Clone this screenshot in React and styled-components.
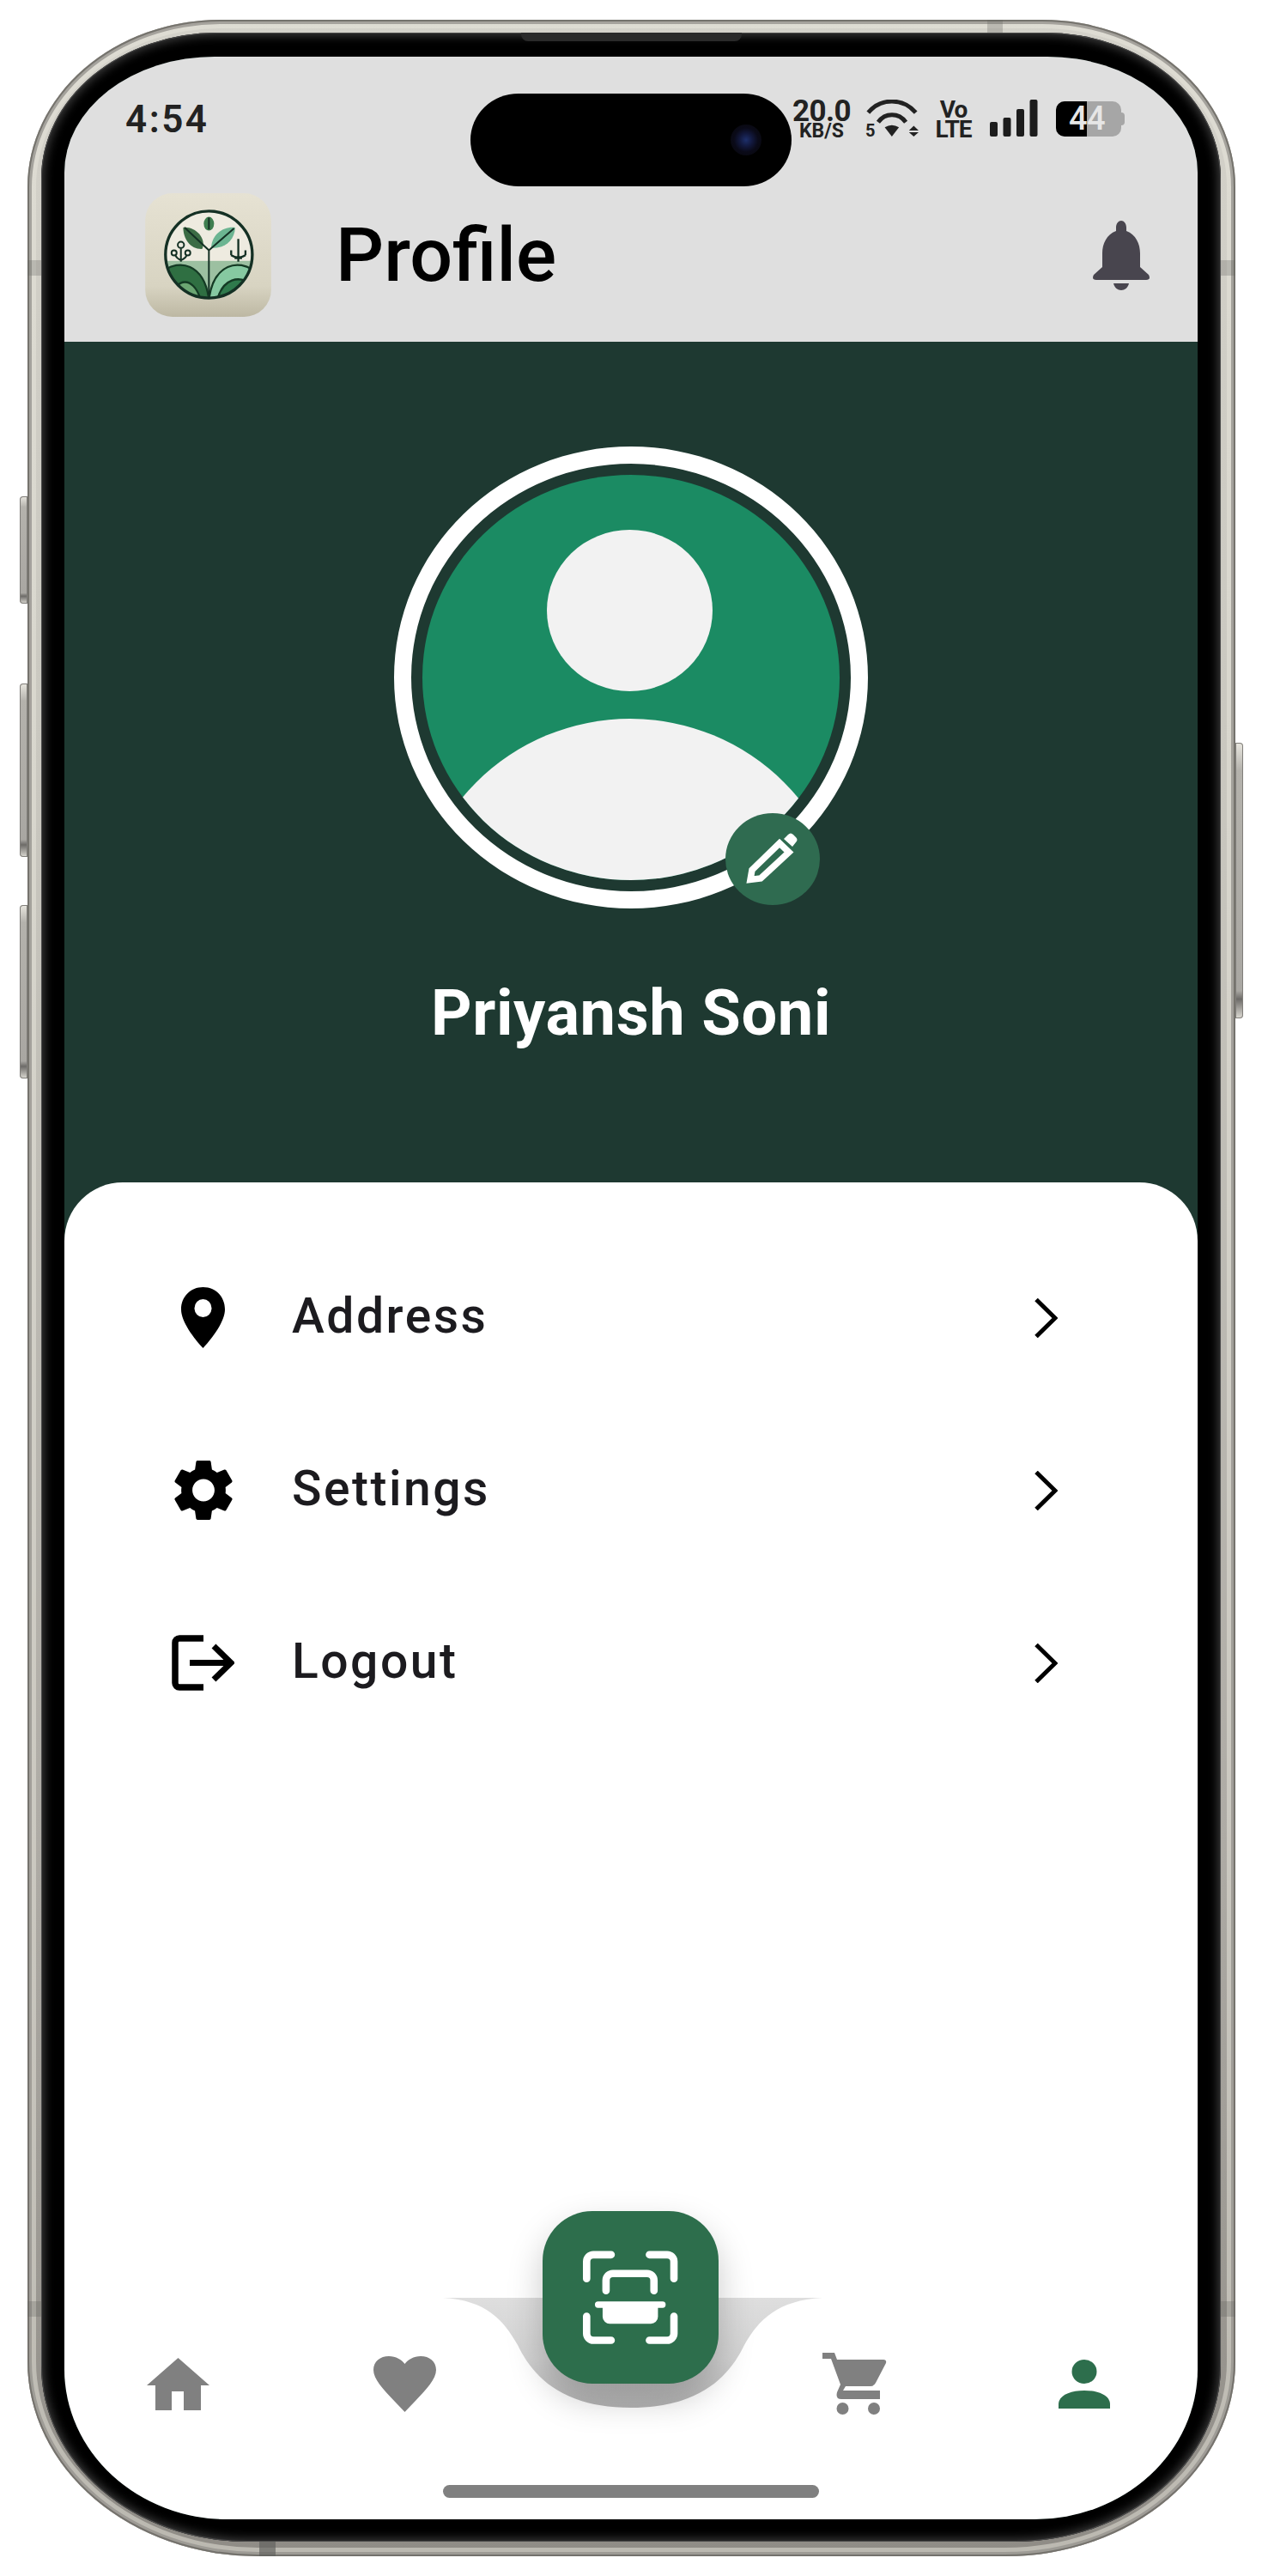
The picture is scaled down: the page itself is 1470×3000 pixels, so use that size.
import React from "react";
import styled, { createGlobalStyle } from "styled-components";

const Global = createGlobalStyle`
  html, body { margin: 0; padding: 0; background: #fff; }
  * { box-sizing: border-box; }
  body { font-family: "Roboto", "Liberation Sans", sans-serif; }
`;

const Page = styled.div`
  width: 1470px;
  height: 3000px;
  padding: 23px 0 0 32px;
  background: #fff;
`;

const Metal = styled.div`
  position: relative;
  width: 1407px;
  height: 2954px;
  padding: 15px 17px 17px 16px;
  border-radius: 225px 225px 268px 268px / 195px 195px 227px 227px;
  background: linear-gradient(180deg, #d4d2ca 0%, #c9c7bf 30%, #aeaba5 72%, #8f8c86 100%);
  box-shadow: inset 0 0 0 2px rgba(112, 110, 104, 0.9), inset 0 0 0 5px rgba(150, 148, 142, 0.8), inset 0 0 0 10px rgba(232, 230, 220, 0.5);
`;

const Band = styled.div`
  position: absolute;
  left: ${(p) => p.$x}px;
  top: ${(p) => p.$y}px;
  width: ${(p) => p.$w}px;
  height: ${(p) => p.$h}px;
  background: rgba(96, 96, 92, ${(p) => p.$o || 0.28});
`;

const SideButton = styled.div`
  position: absolute;
  top: ${(p) => p.$y}px;
  height: ${(p) => p.$h}px;
  width: 9px;
  ${(p) => (p.$right ? "left: 1407px; border-radius: 0 4px 4px 0;" : "left: -9px; border-radius: 4px 0 0 4px;")}
  background: linear-gradient(180deg, #e8e6df 0%, #b4b2ac 10%, #a9a7a2 90%, #6d6b68 93%, #dedcd5 100%);
  box-shadow: inset 0 0 0 1px #807e7a;
`;

const Bezel = styled.div`
  position: relative;
  width: 1374px;
  height: 2922px;
  padding: 28px 27px 26px 27px;
  background: #000;
  border-radius: 205px 205px 240px 240px / 170px 170px 205px 205px;
  box-shadow: inset 0 0 0 1px #4a4a4a, inset 0 0 12px 3px rgba(74, 74, 74, 0.85);
`;

const Speaker = styled.div`
  position: absolute;
  left: 559px;
  top: 0;
  width: 257px;
  height: 10px;
  background: #2a2a2a;
  border-radius: 0 0 8px 8px;
`;

const Screen = styled.div`
  position: relative;
  width: 1320px;
  height: 2868px;
  display: flex;
  flex-direction: column;
  overflow: hidden;
  background: #1e3931;
  border-radius: 175px 175px 190px 190px / 135px 135px 175px 175px;
`;

const Island = styled.div`
  position: absolute;
  left: 473px;
  top: 43px;
  width: 374px;
  height: 108px;
  background: #000;
  border-radius: 56px / 54px;
  z-index: 3;
`;

const Lens = styled.div`
  position: absolute;
  left: 303px;
  top: 36px;
  width: 36px;
  height: 36px;
  border-radius: 50%;
  background: radial-gradient(circle, #1d2f6a 0%, #12183c 30%, #0a0a18 55%, #070709 100%);
`;

const Header = styled.header`
  height: 332px;
  flex: none;
  background: #dfdfdf;
  display: flex;
  flex-direction: column;
`;

const StatusBar = styled.div`
  height: 159px;
  padding: 50px 85px 0 71px;
  display: flex;
  justify-content: space-between;
  align-items: flex-start;
`;

const Time = styled.span`
  font-size: 44px;
  line-height: 46px;
  font-weight: 600;
  letter-spacing: 2.5px;
  color: #222;
`;

const StatusGroup = styled.div`
  display: flex;
  align-items: flex-start;
`;

const Speed = styled.div`
  width: 72px;
  margin-left: -2px;
  display: flex;
  flex-direction: column;
  align-items: center;
  color: #222;
  font-weight: 700;
  margin-right: 15px;
`;

const SpeedValue = styled.span`
  font-size: 35px;
  line-height: 27px;
  letter-spacing: -0.6px;
`;

const SpeedUnit = styled.span`
  font-size: 23px;
  line-height: 20px;
`;

const WifiBox = styled.div`
  position: relative;
  width: 63px;
  height: 44px;
  display: flex;
`;

const WifiBand = styled.span`
  position: absolute;
  left: 0;
  bottom: 0;
  font-size: 20px;
  line-height: 16px;
  font-weight: 700;
  color: #222;
`;

const Volte = styled.div`
  width: 39px;
  margin: 0 23px 0 20px;
  display: flex;
  flex-direction: column;
  align-items: center;
  color: #222;
  font-weight: 700;
`;

const VolteLine = styled.span`
  font-size: 28px;
  line-height: 23px;
  letter-spacing: -1px;
  white-space: nowrap;
`;

const Battery = styled.div`
  position: relative;
  width: 76px;
  height: 41px;
  margin: 2px 4px 0 21px;
  border-radius: 10px;
  background: #a6a6a6;
  overflow: visible;
`;

const BatteryFill = styled.div`
  position: absolute;
  inset: 0 40px 0 0;
  background: #000;
  border-radius: 10px 0 0 10px;
`;

const BatteryNub = styled.div`
  position: absolute;
  right: -4px;
  top: 13px;
  width: 4px;
  height: 15px;
  background: #a6a6a6;
  border-radius: 0 4px 4px 0;
`;

const BatteryText = styled.span`
  position: absolute;
  left: 15px;
  top: 0;
  font-size: 38px;
  line-height: 41px;
  font-weight: 500;
  letter-spacing: -0.5px;
  color: #e6e6e6;
`;

const AppBar = styled.div`
  flex: 1;
  padding: 0 55px 29px 94px;
  display: flex;
  align-items: center;
`;

const Title = styled.h1`
  flex: 1;
  margin: 0 0 0 75px;
  font-size: 88px;
  line-height: 100px;
  font-weight: 500;
  color: #000;
`;

const Hero = styled.section`
  height: 979px;
  flex: none;
  padding-top: 122px;
  display: flex;
  flex-direction: column;
  align-items: center;
`;

const Avatar = styled.div`
  position: relative;
  width: 552px;
  height: 538px;
  padding: 13px;
  border: 20px solid #fff;
  border-radius: 50%;
  flex: none;
`;

const Disc = styled.div`
  position: relative;
  width: 100%;
  height: 100%;
  border-radius: 50%;
  overflow: hidden;
  background: #1b8b63;
`;

const Head = styled.div`
  position: absolute;
  left: 145px;
  top: 64px;
  width: 193px;
  height: 188px;
  border-radius: 50%;
  background: #f2f2f2;
`;

const Shoulders = styled.div`
  position: absolute;
  left: -12px;
  top: 284px;
  width: 508px;
  height: 508px;
  border-radius: 50%;
  background: #f2f2f2;
`;

const EditBadge = styled.div`
  position: absolute;
  left: 366px;
  top: 407px;
  width: 110px;
  height: 107px;
  border-radius: 50%;
  background: #2f6b50;
`;

const Name = styled.div`
  margin-top: 82px;
  font-size: 74px;
  line-height: 80px;
  font-weight: 700;
  letter-spacing: 0.6px;
  color: #fff;
`;

const Sheet = styled.section`
  flex: 1;
  display: flex;
  flex-direction: column;
  background: #fff;
  border-radius: 68px 68px 0 0;
`;

const Menu = styled.div`
  flex: 1;
  padding-top: 57px;
  display: flex;
  flex-direction: column;
`;

const Row = styled.div`
  height: 201px;
  padding: 0 163px 0 125px;
  display: flex;
  align-items: center;
`;

const RowIcon = styled.div`
  width: 73px;
  display: flex;
  justify-content: center;
  align-items: center;
  color: #000;
`;

const RowLabel = styled.span`
  flex: 1;
  margin: 0 0 3px 67px;
  font-size: 57px;
  line-height: 70px;
  font-weight: 500;
  letter-spacing: 2.5px;
  color: #1c1b1f;
`;

const Nav = styled.nav`
  position: relative;
  height: 258px;
  flex: none;
  display: flex;
  flex-direction: column;
  align-items: center;
`;

const NavNotch = styled.svg`
  position: absolute;
  left: 441px;
  top: 0;
`;

const Fab = styled.div`
  position: absolute;
  left: 557px;
  top: -101px;
  width: 205px;
  height: 201px;
  border-radius: 58px;
  background: #2d6e4c;
  box-shadow: 0 18px 40px rgba(0, 0, 0, 0.22);
  display: flex;
  align-items: center;
  justify-content: center;
`;

const NavRow = styled.div`
  width: 100%;
  height: 218px;
  padding-top: 64px;
  display: grid;
  grid-template-columns: repeat(5, 1fr);
`;

const NavItem = styled.div`
  height: 72px;
  display: flex;
  justify-content: center;
  align-items: center;
  color: ${(p) => (p.$active ? "#2d6e4c" : "#808080")};
`;

const HomeIndicator = styled.div`
  width: 438px;
  height: 15px;
  border-radius: 8px;
  background: #808080;
`;

const Logo = () => (
  <svg width="147" height="144" viewBox="57 45 441 433">
    <defs>
      <linearGradient id="lg" x1="0" y1="0" x2="0" y2="1">
        <stop offset="0" stopColor="#e6e2d3" />
        <stop offset="0.75" stopColor="#d8d4c2" />
        <stop offset="1" stopColor="#bdb8a3" />
      </linearGradient>
      <clipPath id="lc">
        <circle cx="280" cy="260" r="150" />
      </clipPath>
    </defs>
    <rect x="57" y="45" width="441" height="433" rx="95" fill="url(#lg)" />
    <circle cx="280" cy="260" r="152" fill="#eeebe0" />
    <g clipPath="url(#lc)">
      <rect x="120" y="282" width="320" height="140" fill="#9cc0a1" />
      <path d="M120 318 C175 275 262 290 280 415 H120 Z" fill="#2f6f42" stroke="#143a24" strokeWidth="7" />
      <path d="M440 318 C385 275 298 290 280 415 H440 Z" fill="#86c9a1" stroke="#143a24" strokeWidth="7" />
      <path d="M150 410 C165 340 225 335 250 415 Z" fill="#6ba572" stroke="#143a24" strokeWidth="7" />
      <path d="M310 415 C330 345 385 330 430 365 V415 Z" fill="#2f7a4c" stroke="#143a24" strokeWidth="7" />
    </g>
    <circle cx="280" cy="260" r="152" fill="none" stroke="#143024" strokeWidth="10" />
    <path d="M190 165 C230 160 272 200 257 240 C215 242 190 205 190 165 Z" fill="#3c6c45" />
    <path d="M372 165 C330 160 290 190 288 236 C335 240 370 210 372 165 Z" fill="#6cb592" />
    <ellipse cx="280" cy="152" rx="18" ry="24" fill="#3f7f50" />
    <path d="M280 400 V245 L195 165 M280 245 L368 168 M280 130 V172" fill="none" stroke="#143024" strokeWidth="6" />
    <path d="M182 285 V238 M182 280 C170 275 165 268 162 262 M182 280 C195 275 200 268 202 262" fill="none" stroke="#143024" strokeWidth="6" />
    <circle cx="182" cy="226" r="11" fill="none" stroke="#143024" strokeWidth="6" />
    <circle cx="158" cy="254" r="9" fill="none" stroke="#143024" strokeWidth="6" />
    <circle cx="206" cy="254" r="9" fill="none" stroke="#143024" strokeWidth="6" />
    <path d="M383 205 V285 M358 262 Q383 278 408 262 M358 245 V262 M408 245 V262 M370 272 H396" fill="none" stroke="#143024" strokeWidth="7" />
  </svg>
);

const Bell = () => (
  <svg width="68" height="81" viewBox="0 0 66 81" fill="#48454e">
    <path d="M33 0 C36 0 39 3 39 8 V12 C50 16 55 27 55 38 V54 L65 63 Q68 69 62 69 H4 Q-2 69 1 63 L11 54 V38 C11 27 16 16 27 12 V8 C27 3 30 0 33 0 Z" />
    <path d="M24 73 H42 C41 78 37 81 33 81 C29 81 25 78 24 73 Z" />
  </svg>
);

const Wifi = () => (
  <WifiBox>
    <svg width="63" height="44" viewBox="325 85 190 132">
      <path d="M335 130 C380 78 456 78 502 130" fill="none" stroke="#222" strokeWidth="15" />
      <path d="M370 164 C395 130 442 130 467 164" fill="none" stroke="#222" strokeWidth="15" />
      <path d="M393 182 Q418 166 443 182 L418 214 Z" fill="#222" />
      <path d="M478 193 L495 177 L512 193 Z M478 199 H512 L495 214 Z" fill="#222" />
    </svg>
    <WifiBand>5</WifiBand>
  </WifiBox>
);

const Signal = () => (
  <svg width="56" height="43" viewBox="0 0 56 43" fill="#1c1c1c">
    <rect x="0" y="26" width="9" height="17" rx="2" />
    <rect x="15.5" y="21" width="9" height="22" rx="2" />
    <rect x="31" y="11" width="9" height="32" rx="2" />
    <rect x="46.5" y="0" width="9" height="43" rx="2" />
  </svg>
);

const Pencil = () => (
  <svg width="110" height="107" viewBox="0 0 110 107">
    <path d="M29 77.5 L31 66 L63 35 L74 45.5 L41 76 Z" fill="none" stroke="#fff" strokeWidth="7.5" strokeLinejoin="miter" />
    <path d="M68 30 L73 25 Q76 22 79 25 L82 28 Q85 31 82 34 L78 39 Z" fill="#fff" />
  </svg>
);

const Pin = () => (
  <svg width="51" height="71" viewBox="0 0 51 71">
    <path
      fillRule="evenodd"
      fill="#000"
      d="M25.5 0 C11 0 0 11 0 26 C0 40 15 60 25.5 71 C36 60 51 40 51 26 C51 11 40 0 25.5 0 Z M25.5 14 a10 10.5 0 1 1 0 21 a10 10.5 0 1 1 0 -21 Z"
    />
  </svg>
);

const Gear = () => (
  <svg width="70" height="69" viewBox="2.6 2.4 18.8 19.2" fill="#000">
    <path d="M19.14,12.94c0.04-0.3,0.06-0.61,0.06-0.94c0-0.32-0.02-0.64-0.07-0.94l2.03-1.58c0.18-0.14,0.23-0.41,0.12-0.61 l-1.92-3.32c-0.12-0.22-0.37-0.29-0.59-0.22l-2.39,0.96c-0.5-0.38-1.03-0.7-1.62-0.94L14.4,2.81c-0.04-0.24-0.24-0.41-0.48-0.41 h-3.84c-0.24,0-0.43,0.17-0.47,0.41L9.25,5.35C8.66,5.59,8.12,5.92,7.63,6.29L5.24,5.33c-0.22-0.08-0.47,0-0.59,0.22L2.74,8.87 C2.62,9.08,2.66,9.34,2.86,9.48l2.03,1.58C4.84,11.36,4.8,11.69,4.8,12s0.02,0.64,0.07,0.94l-2.03,1.58 c-0.18,0.14-0.23,0.41-0.12,0.61l1.92,3.32c0.12,0.22,0.37,0.29,0.59,0.22l2.39-0.96c0.5,0.38,1.03,0.7,1.62,0.94l0.36,2.54 c0.05,0.24,0.24,0.41,0.48,0.41h3.84c0.24,0,0.44-0.17,0.47-0.41l0.36-2.54c0.59-0.24,1.13-0.56,1.62-0.94l2.39,0.96 c0.22,0.08,0.47,0,0.59-0.22l1.92-3.32c0.12-0.22,0.07-0.47-0.12-0.61L19.14,12.94z M12,15.6c-1.98,0-3.6-1.62-3.6-3.6 s1.62-3.6,3.6-3.6s3.6,1.62,3.6,3.6S13.98,15.6,12,15.6z" />
  </svg>
);

const LogoutIcon = () => (
  <svg width="73" height="65" viewBox="0 0 73 65" fill="none" stroke="#000" strokeWidth="7.5">
    <path d="M37 4 H9 a5 5 0 0 0 -5 5 V56 a5 5 0 0 0 5 5 H37" />
    <path d="M21 32.5 H68 M49 13 L69 32.5 L49 52" strokeWidth="7" />
  </svg>
);

const Chevron = () => (
  <svg width="28" height="46" viewBox="0 0 28 46" fill="none" stroke="#000" strokeWidth="5">
    <path d="M3 1.5 L25 23 L3 44.5" />
  </svg>
);

const Home = () => (
  <svg width="73" height="61" viewBox="0 0 73 61" fill="currentColor">
    <path d="M36.5 0 L73 32 H63 V61 H43 V39 H29 V61 H10 V32 H0 Z" />
  </svg>
);

const Heart = () => (
  <svg width="73" height="65" viewBox="0 0 73 65" fill="currentColor">
    <path d="M36.5 65 C20 47 0 30 0 16 C0 6 8 0 18 0 C26 0 33 4 36.5 9 C40 4 47 0 55 0 C65 0 73 6 73 16 C73 30 53 47 36.5 65 Z" />
  </svg>
);

const Cart = () => (
  <svg width="82" height="72" viewBox="0 0 82 72" fill="currentColor">
    <path d="M0 0 H14 L17 8 H71 Q75 8 74 12 L62 35 Q60 39 56 39 H27 L24 44 H67 V54 H22 Q15 54 17 46 L21 37 L10 7 H0 Z" />
    <circle cx="23.5" cy="65" r="7" />
    <circle cx="60" cy="65" r="7" />
  </svg>
);

const Person = () => (
  <svg width="60" height="57" viewBox="0 0 60 57" fill="currentColor">
    <ellipse cx="30" cy="14" rx="14.5" ry="14" />
    <path d="M0 57 V52 C0 42 13 36 30 36 C47 36 60 42 60 52 V57 Z" />
  </svg>
);

const ScanIcon = () => (
  <svg width="117" height="115" viewBox="170 145 352 345" fill="none" stroke="#fff" strokeWidth="26" strokeLinecap="round">
    <path d="M192 252 V192 a24 24 0 0 1 24 -24 H278" />
    <path d="M412 168 H474 a24 24 0 0 1 24 24 V252" />
    <path d="M192 384 V444 a24 24 0 0 0 24 24 H278" />
    <path d="M412 468 H474 a24 24 0 0 0 24 -24 V384" />
    <path d="M260 294 V258 a24 24 0 0 1 24 -24 H404 a24 24 0 0 1 24 24 V294" />
    <path d="M232 343 H458" strokeWidth="22" />
    <path d="M248 343 H442 V385 a25 25 0 0 1 -25 25 H275 a25 25 0 0 1 -27 -25 Z" fill="#fff" stroke="none" />
  </svg>
);

const menu = [
  { label: "Address", icon: <Pin /> },
  { label: "Settings", icon: <Gear /> },
  { label: "Logout", icon: <LogoutIcon /> },
];

export default function App() {
  return (
    <Page>
      <Global />
      <Metal>
        <SideButton $y={555} $h={125} />
        <SideButton $y={773} $h={202} />
        <SideButton $y={1031} $h={202} />
        <SideButton $right $y={842} $h={321} />
        <Band $x={0} $y={280} $w={16} $h={18} />
        <Band $x={1390} $y={280} $w={17} $h={18} />
        <Band $x={0} $y={2657} $w={16} $h={18} />
        <Band $x={1390} $y={2657} $w={17} $h={18} />
        <Band $x={270} $y={2937} $w={19} $h={17} $o={0.65} />
        <Band $x={1118} $y={0} $w={18} $h={15} />
        <Bezel>
          <Speaker />
          <Screen>
            <Island>
              <Lens />
            </Island>
            <Header>
              <StatusBar>
                <Time>4:54</Time>
                <StatusGroup>
                  <Speed>
                    <SpeedValue>20.0</SpeedValue>
                    <SpeedUnit>KB/S</SpeedUnit>
                  </Speed>
                  <Wifi />
                  <Volte>
                    <VolteLine>Vo</VolteLine>
                    <VolteLine>LTE</VolteLine>
                  </Volte>
                  <Signal />
                  <Battery>
                    <BatteryFill />
                    <BatteryNub />
                    <BatteryText>44</BatteryText>
                  </Battery>
                </StatusGroup>
              </StatusBar>
              <AppBar>
                <Logo />
                <Title>Profile</Title>
                <Bell />
              </AppBar>
            </Header>
            <Hero>
              <Avatar>
                <Disc>
                  <Head />
                  <Shoulders />
                </Disc>
                <EditBadge>
                  <Pencil />
                </EditBadge>
              </Avatar>
              <Name>Priyansh Soni</Name>
            </Hero>
            <Sheet>
              <Menu>
                {menu.map((m) => (
                  <Row key={m.label}>
                    <RowIcon>{m.icon}</RowIcon>
                    <RowLabel>{m.label}</RowLabel>
                    <Chevron />
                  </Row>
                ))}
              </Menu>
              <Nav>
                <NavNotch width="442" height="128" viewBox="0 0 442 128">
                  <defs>
                    <linearGradient id="ng" x1="0" y1="0" x2="0" y2="1">
                      <stop offset="0" stopColor="#dedede" />
                      <stop offset="0.55" stopColor="#d2d2d2" />
                      <stop offset="1" stopColor="#b4b4b4" />
                    </linearGradient>
                  </defs>
                  <path
                    d="M0 0 C50 3 70 25 87 55 C103 88 135 128 219 128 C303 128 335 88 351 55 C368 25 390 3 442 0 Z"
                    fill="url(#ng)"
                  />
                </NavNotch>
                <Fab>
                  <ScanIcon />
                </Fab>
                <NavRow>
                  <NavItem><Home /></NavItem>
                  <NavItem><Heart /></NavItem>
                  <NavItem />
                  <NavItem><Cart /></NavItem>
                  <NavItem $active><Person /></NavItem>
                </NavRow>
                <HomeIndicator />
              </Nav>
            </Sheet>
          </Screen>
        </Bezel>
      </Metal>
    </Page>
  );
}
